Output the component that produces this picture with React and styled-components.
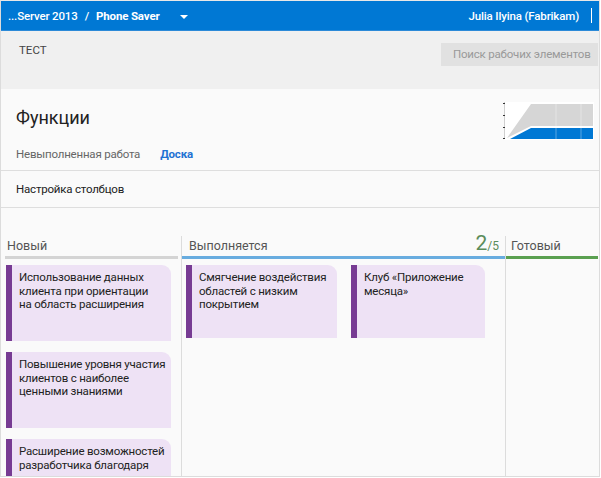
import React from "react";
import styled, { createGlobalStyle } from "styled-components";

const Global = createGlobalStyle`
  html, body { margin: 0; padding: 0; background: #ffffff; }
  body { font-family: Roboto, "Noto Sans", sans-serif; }
  * { box-sizing: border-box; }
`;

const Frame = styled.div`
  width: 600px;
  height: 477px;
  border: 1px solid #dcdcdc;
  border-top-color: #e8e8e8;
  display: flex;
  flex-direction: column;
  overflow: hidden;
  background: #fafafa;
`;

const TopBar = styled.header`
  height: 30px;
  flex: none;
  background: #0078d4;
  border-bottom: 1px solid #2b8ad8;
  display: flex;
  align-items: center;
  justify-content: space-between;
  padding: 0 7px 0 7px;
  color: #ffffff;
  font-size: 11.5px;
  letter-spacing: -0.15px;
`;

const Crumbs = styled.div`
  display: flex;
  align-items: center;
  white-space: nowrap;
`;

const Crumb = styled.span`
  font-weight: ${(p) => (p.$strong ? 700 : 500)};
`;

const Slash = styled.span`
  margin: 0 7px;
  font-weight: 500;
`;

const Caret = styled.span`
  margin-left: 20px;
  width: 0;
  height: 0;
  border-left: 4px solid transparent;
  border-right: 4px solid transparent;
  border-top: 4px solid #ffffff;
  margin-top: 2px;
`;

const User = styled.div`
  display: flex;
  align-items: center;
  font-weight: 500;
  white-space: nowrap;
`;

const Separator = styled.span`
  width: 1px;
  height: 15px;
  background: #ffffff;
  margin-left: 12px;
`;

const HubBar = styled.div`
  height: 58px;
  flex: none;
  background: #f0f0f0;
  display: flex;
  align-items: flex-start;
  justify-content: space-between;
  padding: 0 1px 0 18px;
`;

const HubTitle = styled.div`
  margin-top: 11px;
  font-size: 11.5px;
  line-height: 16px;
  color: #444;
`;

const SearchBox = styled.div`
  margin-top: 12px;
  width: 157px;
  height: 23px;
  background: #e1e1e1;
  color: #999;
  font-size: 11.5px;
  letter-spacing: -0.2px;
  line-height: 23px;
  padding-left: 12px;
  white-space: nowrap;
  overflow: hidden;
`;

const TitleRow = styled.div`
  height: 50px;
  flex: none;
  display: flex;
  justify-content: space-between;
  align-items: flex-start;
  padding: 0 4px 0 15px;
`;

const PageTitle = styled.h1`
  margin: 17px 0 0 0;
  font-size: 18px;
  line-height: 24px;
  font-weight: 400;
  color: #222;
`;

const Chart = styled.svg`
  margin-top: 12px;
  display: block;
`;

const TabsRow = styled.nav`
  height: 32px;
  flex: none;
  display: flex;
  align-items: center;
  gap: 20px;
  padding: 0 0 1px 15px;
  border-bottom: 1px solid #dedede;
`;

const Tab = styled.span`
  font-size: 11.5px;
  letter-spacing: -0.2px;
  color: ${(p) => (p.$active ? "#1f72d3" : "#666")};
  font-weight: ${(p) => (p.$active ? 700 : 400)};
`;

const ToolRow = styled.div`
  height: 37px;
  flex: none;
  display: flex;
  align-items: center;
  padding: 0 0 0 15px;
  border-bottom: 1px solid #dedede;
  font-size: 11.5px;
  letter-spacing: -0.2px;
  color: #222;
`;

const Board = styled.div`
  flex: 1;
  min-height: 0;
  padding-top: 28px;
  display: grid;
  grid-template-columns: 181px 324px 1fr;
`;

const Column = styled.section`
  min-height: 0;
  border-right: ${(p) => (p.$last ? "none" : "1px solid #dcdcdc")};
  display: flex;
  flex-direction: column;
`;

const ColumnHeader = styled.div`
  height: 23px;
  flex: none;
  display: flex;
  align-items: baseline;
  justify-content: space-between;
  margin: ${(p) => p.$margin};
  padding: 0 6px 0 ${(p) => p.$pad}px;
  border-bottom: 3px solid ${(p) => p.$color};
  font-size: 12.5px;
  line-height: 20px;
  color: #555;
`;

const Limit = styled.span`
  color: #5b8c5b;
  font-size: 12px;
  line-height: 14px;
  white-space: nowrap;
`;

const LimitBig = styled.span`
  font-size: 21px;
  line-height: 14px;
`;

const CardList = styled.div`
  display: flex;
  flex-direction: ${(p) => (p.$row ? "row" : "column")};
  flex-wrap: wrap;
  align-items: flex-start;
  gap: ${(p) => (p.$row ? "14px" : "11px")};
  padding: 6px 0 0 ${(p) => p.$pad}px;
`;

const Card = styled.div`
  width: ${(p) => p.$w}px;
  height: ${(p) => p.$h}px;
  flex: none;
  background: #eee2f5;
  border-left: 6px solid #773b93;
  border-top-right-radius: 9px;
  padding: 6px 5px 0 7px;
  font-size: 11.5px;
  letter-spacing: -0.2px;
  line-height: 13.6px;
  color: #222;
`;

const newCards = [
  "Использование данных клиента при ориентации на\u00A0область расширения",
  "Повышение уровня участия клиентов с наиболее ценными знаниями",
  "Расширение возможностей разработчика благодаря",
];

function BurnChart() {
  return (
    <Chart width="92" height="40" viewBox="0 0 92 40">
      <rect x="1" y="1" width="90" height="38" fill="#ffffff" />
      <line x1="1.5" y1="1" x2="1.5" y2="38" stroke="#cfcfcf" strokeWidth="1" />
      <rect x="0" y="2" width="2" height="1" fill="#333" />
      <rect x="0" y="14" width="2" height="1" fill="#333" />
      <rect x="0" y="26" width="2" height="1" fill="#333" />
      <rect x="0" y="37" width="2" height="1" fill="#333" />
      <polygon points="4,37 28,3 90,3 90,25 28,25 6,36" fill="#d6d6d6" />
      <polygon points="7,38 28,27 90,27 90,38" fill="#0078d4" />
      <line x1="53" y1="3" x2="53" y2="38" stroke="#ffffff" strokeOpacity="0.35" />
      <line x1="78" y1="3" x2="78" y2="38" stroke="#ffffff" strokeOpacity="0.35" />
    </Chart>
  );
}

export default function App() {
  return (
    <>
      <Global />
      <Frame>
        <TopBar>
          <Crumbs>
            <Crumb>...Server 2013</Crumb>
            <Slash>/</Slash>
            <Crumb $strong>Phone Saver</Crumb>
            <Caret />
          </Crumbs>
          <User>
            Julia Ilyina (Fabrikam)
            <Separator />
          </User>
        </TopBar>
        <HubBar>
          <HubTitle>ТЕСТ</HubTitle>
          <SearchBox>Поиск рабочих элементов</SearchBox>
        </HubBar>
        <TitleRow>
          <PageTitle>Функции</PageTitle>
          <BurnChart />
        </TitleRow>
        <TabsRow>
          <Tab>Невыполненная работа</Tab>
          <Tab $active>Доска</Tab>
        </TabsRow>
        <ToolRow>Настройка столбцов</ToolRow>
        <Board>
          <Column>
            <ColumnHeader $margin="0 3px 0 4px" $pad={2} $color="#d4d4d4">
              Новый
            </ColumnHeader>
            <CardList $pad={5}>
              {newCards.map((t) => (
                <Card key={t} $w={165} $h={76}>
                  {t}
                </Card>
              ))}
            </CardList>
          </Column>
          <Column>
            <ColumnHeader $margin="0" $pad={7} $color="#68acdf">
              Выполняется
              <Limit>
                <LimitBig>2</LimitBig>/5
              </Limit>
            </ColumnHeader>
            <CardList $row $pad={4}>
              <Card $w={151} $h={73}>
                Смягчение воздействия областей с низким покрытием
              </Card>
              <Card $w={134} $h={73}>
                Клуб «Приложение месяца»
              </Card>
            </CardList>
          </Column>
          <Column $last>
            <ColumnHeader $margin="0 1px 0 0" $pad={5} $color="#5aa050">
              Готовый
            </ColumnHeader>
          </Column>
        </Board>
      </Frame>
    </>
  );
}
